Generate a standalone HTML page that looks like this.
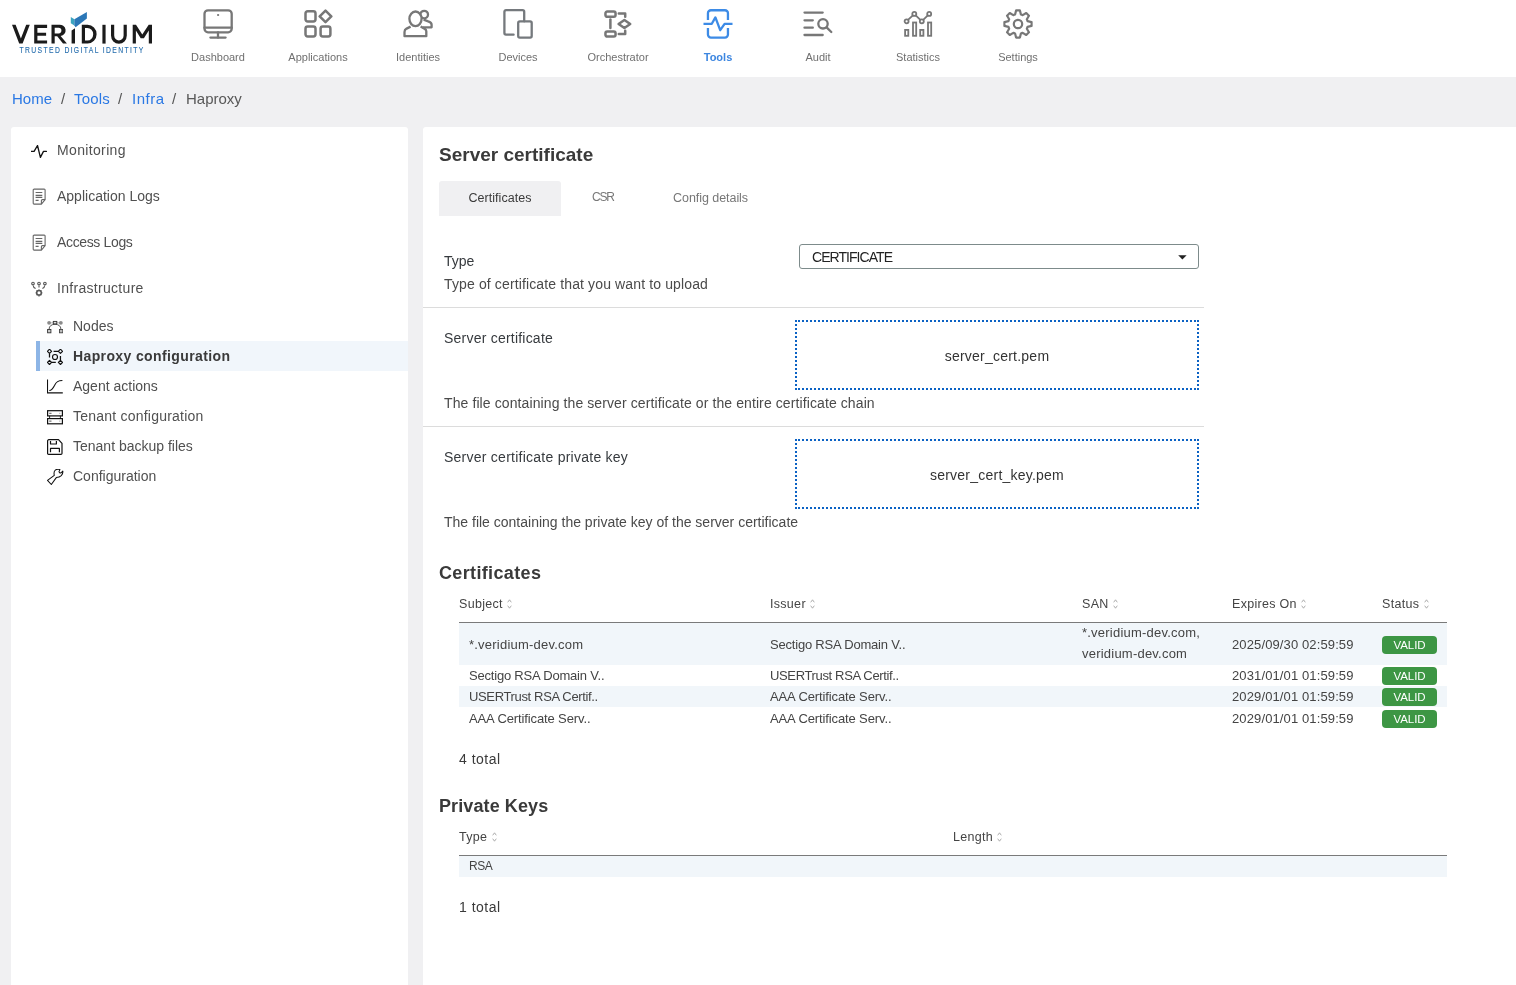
<!DOCTYPE html>
<html><head><meta charset="utf-8">
<style>
*{box-sizing:border-box;margin:0;padding:0}
html,body{width:1516px;height:985px;overflow:hidden}
body{-webkit-font-smoothing:antialiased;background:#f0f0f2;font-family:"Liberation Sans",sans-serif;color:#3c3c3c;position:relative}
.a{position:absolute;white-space:nowrap;line-height:1.15;will-change:transform}
#hdr{position:absolute;left:0;top:0;width:1516px;height:77px;background:#fff}
.nav{position:absolute;top:0;width:100px;height:77px}
.nav svg{position:absolute;left:35px;top:9px}
.nav .lbl{will-change:transform;position:absolute;left:0;width:100px;text-align:center;top:51px;font-size:11px;color:#707070;line-height:1.15}
.cr{will-change:transform;position:absolute;top:90px;font-size:15px;line-height:1.15;color:#555;white-space:nowrap}
#crumb a{color:#2a78e4;text-decoration:none}
#crumb .sep{color:#555;margin:0 7px}
#side{position:absolute;left:11px;top:127px;width:397px;height:870px;background:#fff;border-radius:3px}
#main{position:absolute;left:423px;top:127px;width:1100px;height:870px;background:#fff;border-radius:3px}
.si{position:absolute;font-size:14px;color:#505050;line-height:1.15;white-space:nowrap}
.ic{position:absolute}

.lab{font-size:14px;color:#363a3e;font-weight:normal}
.dsc{font-size:14px;color:#4a4a4a}
.dz{position:absolute;left:795px;width:404px;height:70px;border:2px dotted #0b62c4}
.h2{font-size:18px;font-weight:bold;color:#3a3a3a}
.th{font-size:12.5px;color:#444;letter-spacing:0.3px}
.th svg{display:inline-block;vertical-align:-1px;margin-left:0.5px}
.td{font-size:13px;color:#444;letter-spacing:0.15px}
.badge{will-change:transform;position:absolute;left:1382px;width:55px;height:18px;background:#3d9644;border-radius:4px;color:#fff;font-size:11.5px;text-align:center;line-height:18px;letter-spacing:-0.1px}
</style></head><body>
<div id="hdr">
<svg class="ic" style="left:0;top:0;will-change:transform" width="160" height="60" viewBox="0 0 160 60">
 <g fill="#1b1b1b">
  <path d="M12 24.8 H15.6 L20.9 38.4 L26.2 24.8 H29.8 L22.6 43.6 H19.2 Z"/>
  <path d="M34.2 24.8 H47.1 V27.9 H37.4 V32.7 H46.1 V35.7 H37.4 V40.5 H47.1 V43.6 H34.2 Z"/>
  <path d="M51.5 24.8 H58.8 A5.9 5.6 0 0 1 60.6 35.9 L66.9 43.6 H63 L57.2 36.3 H54.7 V43.6 H51.5 Z M54.7 27.8 V33.4 H58.6 A2.8 2.8 0 0 0 58.6 27.8 Z"/>
  <path d="M71.6 30.4 L75 28.2 V43.6 H71.6 Z"/>
  <path d="M81.8 24.8 H87.6 A9 9.4 0 0 1 87.6 43.6 H81.8 Z M85 27.9 V40.5 H87.4 A5.8 6.3 0 0 0 87.4 27.9 Z"/>
  <path d="M102.4 24.8 H105.6 V43.6 H102.4 Z"/>
  <path d="M111 24.8 H114.2 V35.4 A4.7 5 0 0 0 123.6 35.4 V24.8 H126.8 V35.6 A7.9 8.2 0 0 1 111 35.6 Z"/>
  <path d="M132.7 43.6 V24.8 H136 L142.3 34.4 L148.7 24.8 H152 V43.6 H148.8 V30.6 L143.9 38.2 H140.7 L135.9 30.6 V43.6 Z"/>
 </g>
 <path d="M70.8 16.9 L74.4 19.3 L74.4 25.6 L70.8 23.2 Z" fill="#3ba4bf"/>
 <path d="M74.4 19.3 L86.9 12.1 L86.9 18.5 L75.6 27.3 L74.4 25.6 Z" fill="#2b77b7"/>
 <text transform="translate(19.6 52.9) scale(0.74 1)" x="0" y="0" font-family="Liberation Sans" font-size="9.2" fill="#226bac" stroke="#226bac" stroke-width="0.12" textLength="167" lengthAdjust="spacing">TRUSTED DIGITAL IDENTITY</text>
</svg>

<div class="nav" style="left:168px">
<svg width="30" height="30" viewBox="0 0 30 30" fill="none" stroke="#777" stroke-width="2.3" stroke-linecap="round">
 <rect x="1.5" y="1.3" width="27.2" height="22" rx="3.5"/>
 <line x1="1.5" y1="18.7" x2="28.7" y2="18.7"/>
 <circle cx="15" cy="6" r="0.6" fill="#777" stroke-width="1"/>
 <line x1="15" y1="23.3" x2="15" y2="28.6"/>
 <line x1="7.4" y1="28.6" x2="22.6" y2="28.6"/>
</svg><div class="lbl">Dashboard</div></div>

<div class="nav" style="left:268px">
<svg width="30" height="30" viewBox="0 0 30 30" fill="none" stroke="#777" stroke-width="2.5" stroke-linejoin="round">
 <rect x="2.5" y="2.3" width="10" height="10.1" rx="2.2"/>
 <rect x="2.5" y="17.5" width="10" height="9.9" rx="2.2"/>
 <rect x="17.6" y="17.5" width="9.8" height="9.9" rx="2.2"/>
 <path d="M22.5 1.6 L28.3 7.4 L22.5 13.2 L16.7 7.4 Z"/>
</svg><div class="lbl">Applications</div></div>

<div class="nav" style="left:368px">
<svg width="30" height="30" viewBox="0 0 30 30" fill="none" stroke="#777" stroke-width="2.3" stroke-linejoin="round">
  <circle cx="21.2" cy="5.6" r="3.8"/>
 <path d="M20.6 10.6 L25.2 12.3 C27.5 13 28.6 14 28.6 15.8 V18.3 H19.8"/>
 <ellipse cx="12.5" cy="9.8" rx="6.1" ry="7.3" fill="#fff"/>
 <path d="M7.6 17.6 L3.6 19.6 C2.2 20.4 1.5 21.4 1.5 23 V27.2 H23.3 V22.3 C23.3 21 22.6 20.2 21.4 19.6 L17.6 17.6"/>
</svg><div class="lbl">Identities</div></div>

<div class="nav" style="left:468px">
<svg width="30" height="30" viewBox="0 0 30 30" fill="none" stroke="#75797d" stroke-width="2.3" stroke-linecap="round">
 <path d="M10.6 25.7 H3 A1.6 1.6 0 0 1 1.4 24.1 V2.8 A1.6 1.6 0 0 1 3 1.2 H19.6 A1.6 1.6 0 0 1 21.2 2.8 V12.3"/>
 <rect x="15.2" y="12.4" width="13.5" height="16.2" rx="1.6"/>
</svg><div class="lbl">Devices</div></div>

<div class="nav" style="left:568px">
<svg width="30" height="30" viewBox="0 0 30 30" fill="none" stroke="#777" stroke-width="2.5" stroke-linecap="round" stroke-linejoin="round">
 <rect x="2.45" y="2.55" width="10.1" height="5.3" rx="1.8"/>
 <rect x="2.45" y="22.4" width="10.1" height="5.2" rx="1.8"/>
 <line x1="7.4" y1="10.6" x2="7.4" y2="19.1"/>
 <path d="M21.4 11 L27.2 15 L21.4 19 L15.6 15 Z"/>
 <path d="M15.8 4.5 H22.2 V7.8"/>
 <path d="M15.8 25.1 H22.2 V21.8"/>
</svg><div class="lbl">Orchestrator</div></div>

<div class="nav" style="left:668px">
<svg width="30" height="30" viewBox="0 0 30 30" fill="none" stroke="#3d8be6" stroke-width="2.3" stroke-linejoin="round">
 <path d="M4.95 10.9 V4.3 A3 3 0 0 1 7.95 1.25 H21.95 A3 3 0 0 1 24.95 4.3 V10.9"/>
 <path d="M4.95 19.1 V25.5 A3 3 0 0 0 7.95 28.55 H21.95 A3 3 0 0 0 24.95 25.5 V19.1"/>
 <path d="M0.5 14.8 H8.8 L12.4 8.4 L17.2 21.2 L21.6 14.8 H29.5"/>
</svg><div class="lbl" style="color:#3d86e0;font-weight:bold">Tools</div></div>

<div class="nav" style="left:768px">
<svg width="30" height="30" viewBox="0 0 30 30" fill="none" stroke="#777" stroke-width="2.3" stroke-linecap="round">
 <line x1="1.5" y1="3.6" x2="19.7" y2="3.6"/>
 <line x1="1.5" y1="11.3" x2="9.8" y2="11.3"/>
 <line x1="1.5" y1="18.7" x2="9.8" y2="18.7"/>
 <line x1="1.5" y1="26" x2="19.7" y2="26"/>
 <circle cx="20" cy="14.8" r="4.7"/>
 <line x1="23.6" y1="18.4" x2="28.3" y2="23"/>
</svg><div class="lbl">Audit</div></div>

<div class="nav" style="left:868px">
<svg width="30" height="30" viewBox="0 0 30 30" fill="none" stroke="#777" stroke-width="1.8">
 <rect x="2.1" y="20.9" width="3.2" height="5.9"/>
 <rect x="10" y="13.5" width="3.2" height="13.3"/>
 <rect x="17.2" y="20.9" width="3.2" height="5.9"/>
 <rect x="25" y="13.5" width="3.2" height="13.3"/>
 <circle cx="3.6" cy="12.3" r="2"/>
 <circle cx="11.3" cy="4.9" r="2"/>
 <circle cx="18.8" cy="12.3" r="2"/>
 <circle cx="26.2" cy="4.9" r="2"/>
 <path d="M5 10.9 L9.9 6.3 M12.7 6.3 L17.4 10.9 M20.2 10.9 L24.8 6.3"/>
</svg><div class="lbl">Statistics</div></div>

<div class="nav" style="left:968px">
<svg width="30" height="30" viewBox="0 0 30 30" fill="none" stroke="#777" stroke-width="2.2" stroke-linejoin="round">
 <path d="M12.08 5.44L13.09 1.43L16.91 1.43L17.92 5.44A10.0 10.0 0 0 1 19.69 6.17L23.24 4.06L25.94 6.76L23.83 10.31A10.0 10.0 0 0 1 24.56 12.08L28.57 13.09L28.57 16.91L24.56 17.92A10.0 10.0 0 0 1 23.83 19.69L25.94 23.24L23.24 25.94L19.69 23.83A10.0 10.0 0 0 1 17.92 24.56L16.91 28.57L13.09 28.57L12.08 24.56A10.0 10.0 0 0 1 10.31 23.83L6.76 25.94L4.06 23.24L6.17 19.69A10.0 10.0 0 0 1 5.44 17.92L1.43 16.91L1.43 13.09L5.44 12.08A10.0 10.0 0 0 1 6.17 10.31L4.06 6.76L6.76 4.06L10.31 6.17A10.0 10.0 0 0 1 12.08 5.44Z"/>
 <circle cx="15" cy="15" r="4.2"/>
</svg><div class="lbl">Settings</div></div>
</div>

<div class="cr" style="left:12px;color:#2a78e4">Home</div><div class="cr" style="left:61px">/</div><div class="cr" style="left:74px;color:#2a78e4;letter-spacing:0.2px">Tools</div><div class="cr" style="left:118px">/</div><div class="cr" style="left:132px;color:#2a78e4;letter-spacing:0.5px">Infra</div><div class="cr" style="left:172px">/</div><div class="cr" style="left:186px;color:#585858">Haproxy</div>

<div id="side"></div>
<div id="main"></div>

<div class="a si" style="left:57px;top:141.9px;letter-spacing:0.35px">Monitoring</div>
<div class="a si" style="left:57px;top:187.9px">Application Logs</div>
<div class="a si" style="left:57px;top:233.9px;letter-spacing:-0.35px">Access Logs</div>
<div class="a si" style="left:57px;top:279.9px;letter-spacing:0.3px">Infrastructure</div>
<div class="a si" style="left:73px;top:317.9px">Nodes</div>
<div style="position:absolute;left:36px;top:341px;width:372px;height:30px;background:#f1f6fb"></div>
<div style="position:absolute;left:36px;top:341px;width:4px;height:30px;background:#8db5e6"></div>
<div class="a si" style="left:73px;top:348px;font-weight:bold;color:#3a3a3a;letter-spacing:0.38px">Haproxy configuration</div>
<div class="a si" style="left:73px;top:377.9px">Agent actions</div>
<div class="a si" style="left:73px;top:407.9px;letter-spacing:0.22px">Tenant configuration</div>
<div class="a si" style="left:73px;top:437.9px">Tenant backup files</div>
<div class="a si" style="left:73px;top:467.9px">Configuration</div>

<svg class="ic" style="left:31px;top:145px" width="16" height="14" viewBox="0 0 16 14" fill="none" stroke="#111" stroke-width="1.3" stroke-linecap="round" stroke-linejoin="round">
 <path d="M0.4 6.4 H3.1 L6.5 0.5 L9.4 12.4 L12.5 6.4 H15.4"/>
</svg>
<svg class="ic" style="left:32px;top:188px" width="15" height="18" viewBox="0 0 15 18" fill="none" stroke="#666" stroke-width="1.1" stroke-linejoin="round">
 <path d="M1.2 2 A0.9 0.9 0 0 1 2.1 1.1 H12.2 A0.9 0.9 0 0 1 13.1 2 V11.6 L9.4 16.1 H2.1 A0.9 0.9 0 0 1 1.2 15.2 Z"/>
 <path d="M9.4 16.1 V12.6 Q9.4 11.6 10.4 11.6 H13.1"/>
 <path d="M3.6 4.5 H10.3 M3.6 7.4 H10.3 M3.6 9.4 H10.3 M3.6 12.4 H6.6" stroke="#666"/>
</svg>
<svg class="ic" style="left:32px;top:234px" width="15" height="18" viewBox="0 0 15 18" fill="none" stroke="#666" stroke-width="1.1" stroke-linejoin="round">
 <path d="M1.2 2 A0.9 0.9 0 0 1 2.1 1.1 H12.2 A0.9 0.9 0 0 1 13.1 2 V11.6 L9.4 16.1 H2.1 A0.9 0.9 0 0 1 1.2 15.2 Z"/>
 <path d="M9.4 16.1 V12.6 Q9.4 11.6 10.4 11.6 H13.1"/>
 <path d="M3.6 4.5 H10.3 M3.6 7.4 H10.3 M3.6 9.4 H10.3 M3.6 12.4 H6.6" stroke="#666"/>
</svg>
<svg class="ic" style="left:31px;top:280.5px" width="18" height="18" viewBox="0 0 18 18" fill="none" stroke="#555" stroke-width="1.1">
 <circle cx="2" cy="2.6" r="1.3"/><circle cx="8" cy="2.6" r="1.3"/><circle cx="13.9" cy="2.6" r="1.3"/>
 <path d="M2.2 4.6 Q2.3 6.8 4.6 7.6 M8 4.6 V6.5 M13.7 4.6 Q13.6 6.8 11.4 7.6"/>
 <circle cx="8" cy="11.8" r="2.3" stroke-width="1.5"/>
 <path d="M8 8.4 V9.5 M8 14.1 V15.4 M4.6 11.8 H5.7 M10.3 11.8 H11.4 M5.6 9.4 L6.3 10.1 M9.7 13.5 L10.4 14.2 M10.4 9.4 L9.7 10.1 M6.3 13.5 L5.6 14.2" stroke-width="1.3"/>
</svg>
<svg class="ic" style="left:47px;top:320px" width="16" height="14" viewBox="0 0 16 14">
 <path d="M2 2.8 H14" stroke="#aaa" stroke-width="0.8"/>
 <path d="M2.1 9.2 C2.1 6 4.5 4.3 8 4.3 C11.5 4.3 13.9 6 13.9 9.2" fill="none" stroke="#555" stroke-width="1"/>
 <circle cx="2.1" cy="2.8" r="1.9" fill="#8a8a8a"/>
 <circle cx="13.85" cy="2.8" r="1.9" fill="#8a8a8a"/>
 <rect x="6.3" y="1.4" width="3.5" height="2.5" fill="#ddd" stroke="#333" stroke-width="0.9"/>
 <rect x="0.6" y="9.5" width="3.3" height="3.3" fill="#ccc" stroke="#333" stroke-width="0.9"/>
 <rect x="12.5" y="9.5" width="3.3" height="3.3" fill="#bbb" stroke="#444" stroke-width="0.9"/>
</svg>
<svg class="ic" style="left:47px;top:349px" width="16" height="16" viewBox="0 0 16 16" fill="none" stroke="#111" stroke-width="1.15" stroke-linejoin="round">
 <path d="M2.5 0.2 L4.6 2.3 L2.5 4.4 L0.4 2.3 Z M13.45 0.2 L15.55 2.3 L13.45 4.4 L11.35 2.3 Z M2.5 11.3 L4.6 13.4 L2.5 15.5 L0.4 13.4 Z M13.45 11.3 L15.55 13.4 L13.45 15.5 L11.35 13.4 Z"/>
 <circle cx="8" cy="8" r="2.5"/>
 <path d="M6.6 2.3 H11.3 M2.5 4.4 V8.6 M4.6 13.4 H8.8 M13.45 7 V11.3" stroke-width="1.25"/>
</svg>
<svg class="ic" style="left:47px;top:379px" width="16" height="16" viewBox="0 0 16 16" fill="none" stroke="#111" stroke-width="1.1">
 <path d="M0.5 0.5 V13.9 H15.8"/>
 <path d="M2.3 11.5 C5 11.5 6 9.5 7.5 6.5 C9 3.2 10.5 1.5 15.4 1.5"/>
</svg>
<svg class="ic" style="left:47px;top:410px" width="16" height="15" viewBox="0 0 16 15" fill="none" stroke="#111" stroke-width="1.2">
 <rect x="0.6" y="0.7" width="14.8" height="5.2"/>
 <rect x="0.6" y="8.6" width="14.8" height="5.2"/>
 <path d="M2.6 5.9 V8.6 M13.4 5.9 V8.6" stroke-width="0.9"/>
 <path d="M2.2 3.3 H4.5 M2.2 11.2 H4.5" stroke="#777" stroke-width="1.3"/>
 <path d="M12.3 3.3 H13.3 M12.3 11.2 H13.3" stroke="#aaa" stroke-width="1.3"/>
</svg>
<svg class="ic" style="left:47px;top:439px" width="16" height="16" viewBox="0 0 16 16" fill="none" stroke="#111" stroke-width="1.2" stroke-linejoin="round">
 <path d="M1.8 0.7 H11.5 L15 4.3 V14.5 A1 1 0 0 1 14 15.4 H1.6 A1 1 0 0 1 0.6 14.4 V1.9 A1.2 1.2 0 0 1 1.8 0.7 Z"/>
 <path d="M3.5 1.9 V5 H9.4 V1.9 M3.5 13.3 V9.4 H12.4 V13.3"/>
</svg>
<svg class="ic" style="left:47px;top:469px" width="17" height="17" viewBox="0 0 17 17" fill="none" stroke="#111" stroke-width="1.05" stroke-linejoin="round">
 <path d="M0.5 11.4 L4.3 15.5 L9.3 8.6 C11.5 8.4 13 7.8 14.3 6.6 C15.5 5.4 16 3.5 15.8 2 L14 3.8 C13 4.2 12.2 3.6 12 2.6 L12.9 0.6 C11.5 0.1 9.5 0.3 8.3 1.2 C7 2.2 6.8 4.2 7.3 6.3 Z"/>
</svg>


<div class="a" style="left:439px;top:144px;font-size:19px;font-weight:bold;color:#3a3a3a">Server certificate</div>
<div style="position:absolute;left:439px;top:181px;width:122px;height:35px;background:#f0f0f2;border-radius:3px 3px 0 0"></div>
<div class="a" style="left:439px;width:122px;text-align:center;top:190.6px;font-size:12.5px;color:#3a3a3a;letter-spacing:0.05px">Certificates</div>
<div class="a" style="left:592px;top:191.1px;font-size:12px;color:#777;letter-spacing:-1.2px">CSR</div>
<div class="a" style="left:673px;top:190.6px;font-size:12.5px;color:#777;letter-spacing:-0.05px">Config details</div>

<div class="a lab" style="left:444px;top:253.3px">Type</div>
<div class="a dsc" style="left:444px;top:276.3px;letter-spacing:0.13px">Type of certificate that you want to upload</div>
<div style="position:absolute;left:799px;top:244px;width:400px;height:25px;border:1px solid #7d8b8b;border-radius:3px"></div>
<div class="a" style="left:812px;top:249.2px;font-size:14px;color:#222;letter-spacing:-0.95px">CERTIFICATE</div>
<svg class="ic" style="left:1178px;top:255px" width="9" height="5" viewBox="0 0 9 5"><path d="M0.2 0.3 H8.6 L4.4 4.6 Z" fill="#222"/></svg>
<div style="position:absolute;left:423px;top:307px;width:781px;height:1px;background:#dcdcdc"></div>

<div class="a lab" style="left:444px;top:329.8px;letter-spacing:0.22px">Server certificate</div>
<div class="dz" style="top:320px"></div>
<div class="a" style="left:795px;width:404px;text-align:center;top:348.3px;font-size:14px;color:#333;letter-spacing:0.23px">server_cert.pem</div>
<div class="a dsc" style="left:444px;top:395px;letter-spacing:0.1px">The file containing the server certificate or the entire certificate chain</div>
<div style="position:absolute;left:423px;top:426px;width:781px;height:1px;background:#dcdcdc"></div>

<div class="a lab" style="left:444px;top:448.8px;letter-spacing:0.25px">Server certificate private key</div>
<div class="dz" style="top:439px"></div>
<div class="a" style="left:795px;width:404px;text-align:center;top:467.3px;font-size:14px;color:#333;letter-spacing:0.23px">server_cert_key.pem</div>
<div class="a dsc" style="left:444px;top:514px">The file containing the private key of the server certificate</div>

<div class="a h2" style="left:439px;top:562.7px;letter-spacing:0.35px">Certificates</div>
<div class="a th" style="left:459px;top:596.5px">Subject <svg class="srt" width="5" height="10" viewBox="0 0 5 10" fill="none" stroke="#999" stroke-width="0.8"><path d="M0.7 3.3 L2.5 0.8 L4.3 3.3 M0.7 6.7 L2.5 9.2 L4.3 6.7"/></svg></div>
<div class="a th" style="left:770px;top:596.5px">Issuer <svg class="srt" width="5" height="10" viewBox="0 0 5 10" fill="none" stroke="#999" stroke-width="0.8"><path d="M0.7 3.3 L2.5 0.8 L4.3 3.3 M0.7 6.7 L2.5 9.2 L4.3 6.7"/></svg></div>
<div class="a th" style="left:1082px;top:596.5px">SAN <svg class="srt" width="5" height="10" viewBox="0 0 5 10" fill="none" stroke="#999" stroke-width="0.8"><path d="M0.7 3.3 L2.5 0.8 L4.3 3.3 M0.7 6.7 L2.5 9.2 L4.3 6.7"/></svg></div>
<div class="a th" style="left:1232px;top:596.5px">Expires On <svg class="srt" width="5" height="10" viewBox="0 0 5 10" fill="none" stroke="#999" stroke-width="0.8"><path d="M0.7 3.3 L2.5 0.8 L4.3 3.3 M0.7 6.7 L2.5 9.2 L4.3 6.7"/></svg></div>
<div class="a th" style="left:1382px;top:596.5px">Status <svg class="srt" width="5" height="10" viewBox="0 0 5 10" fill="none" stroke="#999" stroke-width="0.8"><path d="M0.7 3.3 L2.5 0.8 L4.3 3.3 M0.7 6.7 L2.5 9.2 L4.3 6.7"/></svg></div>
<div style="position:absolute;left:459px;top:622px;width:988px;height:1px;background:#7a7a7a"></div>
<div style="position:absolute;left:459px;top:623px;width:988px;height:42px;background:#f1f6fa"></div>
<div style="position:absolute;left:459px;top:686px;width:988px;height:21px;background:#f1f6fa"></div>

<div class="a td" style="left:469px;top:638.2px;letter-spacing:0.22px">*.veridium-dev.com</div>
<div class="a td" style="left:770px;top:638.2px;letter-spacing:-0.2px">Sectigo RSA Domain V..</div>
<div class="a td" style="left:1082px;top:623px;line-height:20.7px;letter-spacing:0.22px">*.veridium-dev.com,<br>veridium-dev.com</div>
<div class="a td" style="left:1232px;top:638.2px;letter-spacing:0.12px">2025/09/30 02:59:59</div>
<div class="badge" style="top:636px">VALID</div>

<div class="a td" style="left:469px;top:669.2px;letter-spacing:-0.2px">Sectigo RSA Domain V..</div>
<div class="a td" style="left:770px;top:669.2px;letter-spacing:-0.35px">USERTrust RSA Certif..</div>
<div class="a td" style="left:1232px;top:669.2px;letter-spacing:0.12px">2031/01/01 01:59:59</div>
<div class="badge" style="top:667px">VALID</div>

<div class="a td" style="left:469px;top:690.2px;letter-spacing:-0.35px">USERTrust RSA Certif..</div>
<div class="a td" style="left:770px;top:690.2px;letter-spacing:-0.12px">AAA Certificate Serv..</div>
<div class="a td" style="left:1232px;top:690.2px;letter-spacing:0.12px">2029/01/01 01:59:59</div>
<div class="badge" style="top:688px">VALID</div>

<div class="a td" style="left:469px;top:712.2px;letter-spacing:-0.12px">AAA Certificate Serv..</div>
<div class="a td" style="left:770px;top:712.2px;letter-spacing:-0.12px">AAA Certificate Serv..</div>
<div class="a td" style="left:1232px;top:712.2px;letter-spacing:0.12px">2029/01/01 01:59:59</div>
<div class="badge" style="top:710px">VALID</div>

<div class="a dsc" style="left:459px;top:751.1px;color:#3a3a3a;letter-spacing:0.48px">4 total</div>

<div class="a h2" style="left:439px;top:795.7px;letter-spacing:0.1px">Private Keys</div>
<div class="a th" style="left:459px;top:830px">Type <svg class="srt" width="5" height="10" viewBox="0 0 5 10" fill="none" stroke="#999" stroke-width="0.8"><path d="M0.7 3.3 L2.5 0.8 L4.3 3.3 M0.7 6.7 L2.5 9.2 L4.3 6.7"/></svg></div>
<div class="a th" style="left:953px;top:830px">Length <svg class="srt" width="5" height="10" viewBox="0 0 5 10" fill="none" stroke="#999" stroke-width="0.8"><path d="M0.7 3.3 L2.5 0.8 L4.3 3.3 M0.7 6.7 L2.5 9.2 L4.3 6.7"/></svg></div>
<div style="position:absolute;left:459px;top:855px;width:988px;height:1px;background:#7a7a7a"></div>
<div style="position:absolute;left:459px;top:856px;width:988px;height:21px;background:#f1f6fa"></div>
<div class="a td" style="left:469px;top:860.4px;font-size:12px;letter-spacing:-0.4px">RSA</div>
<div class="a dsc" style="left:459px;top:899px;color:#3a3a3a;letter-spacing:0.48px">1 total</div>

</body></html>
